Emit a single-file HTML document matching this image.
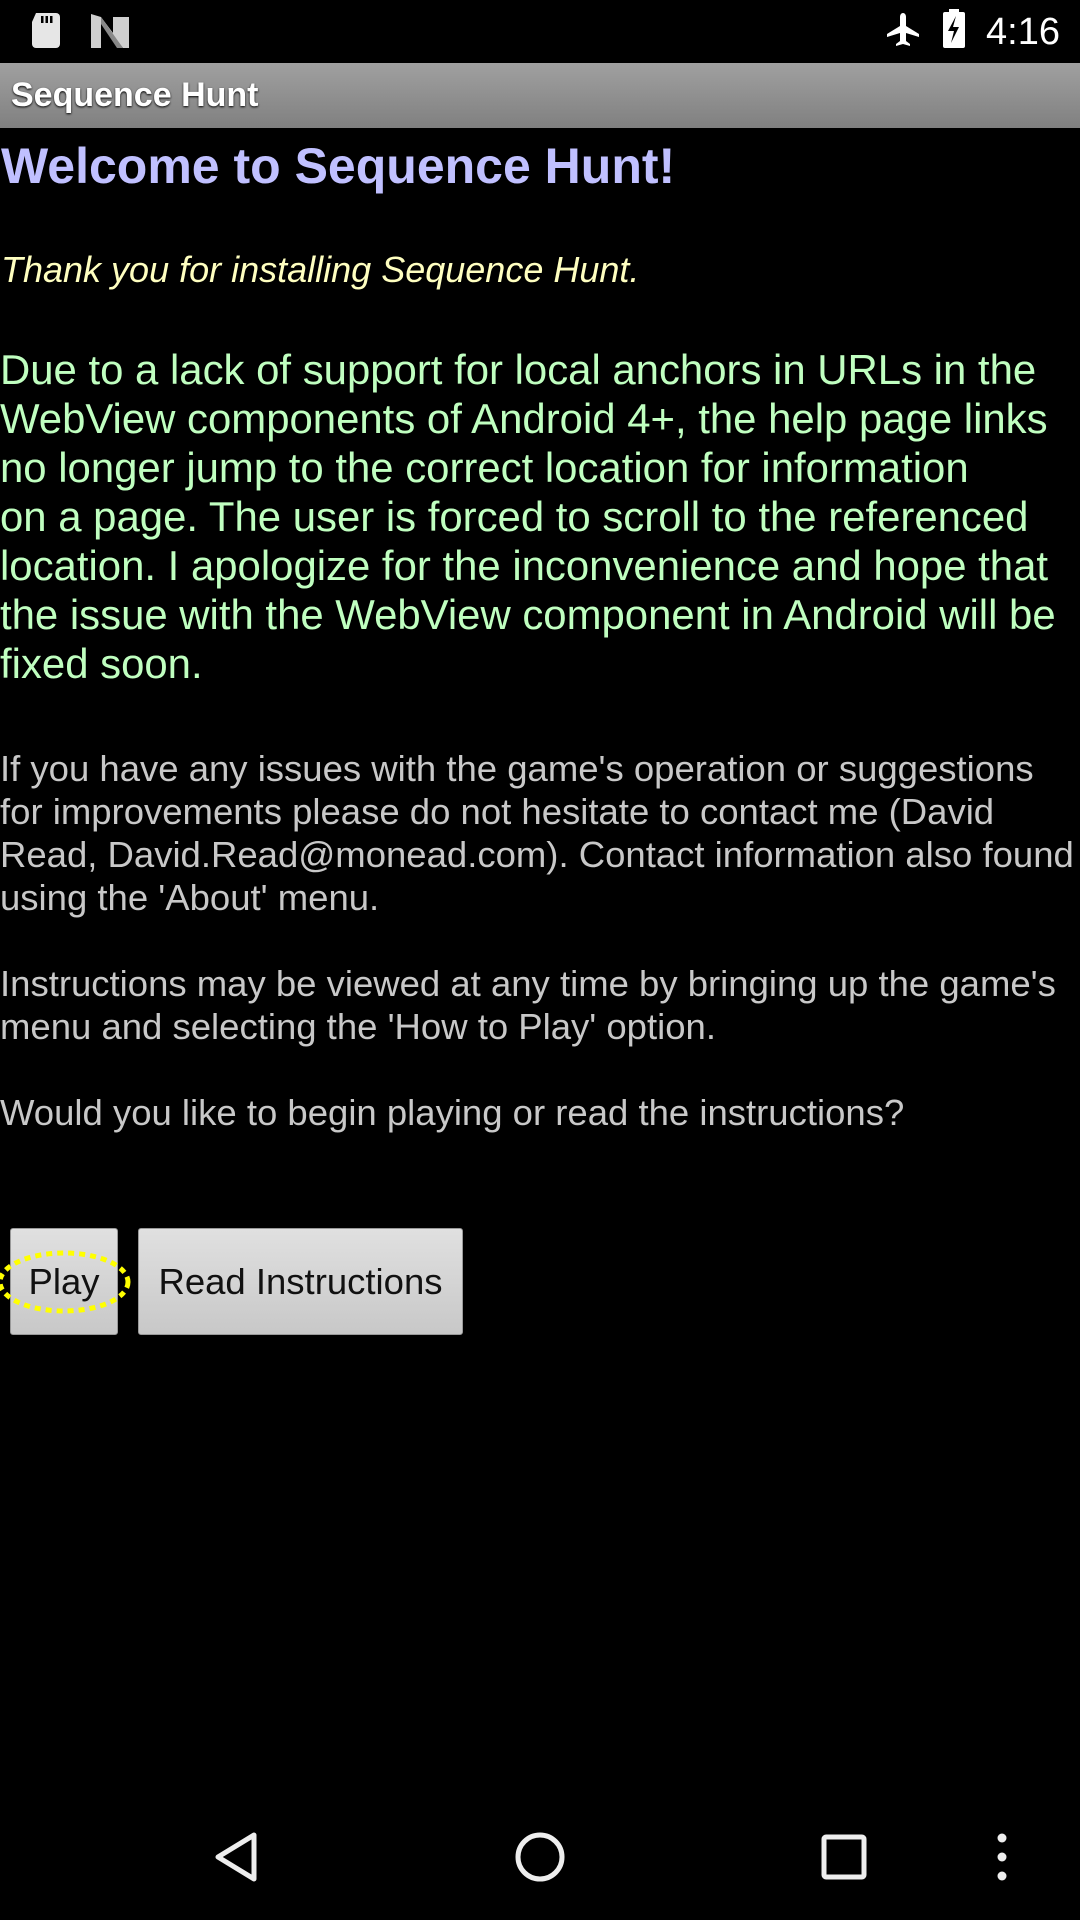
<!DOCTYPE html>
<html><head><meta charset="utf-8"><style>
*{margin:0;padding:0;box-sizing:border-box}
body{width:1080px;height:1920px;background:#000;position:relative;overflow:hidden;font-family:"Liberation Sans",sans-serif}
.a{position:absolute;white-space:nowrap;left:0}
.g{color:#c0ffc0;font-size:41.9px;line-height:49px}
.y{color:#c8c8c8;font-size:36.5px;line-height:43px}
.btn{position:absolute;top:1228px;height:107px;background:linear-gradient(#e0e0e0,#c8c8c8);border:1px solid #999;border-radius:3px;color:#111;font-size:36.5px;text-align:center;line-height:105px}
</style></head><body>
<!-- status bar -->
<svg class="a" style="top:0" width="1080" height="63">
<path d="M36 13h20a4 4 0 0 1 4 4v27a4 4 0 0 1-4 4H36a4 4 0 0 1-4-4V22z" fill="#e6e6e6"/>
<rect x="41" y="16" width="2.5" height="7" fill="#000"/><rect x="45.5" y="16" width="2.5" height="7" fill="#000"/><rect x="50" y="16" width="2.5" height="7" fill="#000"/>
<path d="M91 14l10 3 12 16V17h16v31h-6l-22-28v28H91z" fill="#cfcfcf"/>
<path d="M101 17l22 31h-6L101 24z" fill="#888"/>
<path d="M903 13c2 0 3 2 3 4v9l13 8v3l-13-4v8l4 3v2l-7-2-7 2v-2l4-3v-8l-13 4v-3l13-8v-9c0-2 1-4 3-4z" fill="#fff"/>
<rect x="943" y="12" width="22" height="36" rx="2" fill="#fff"/><rect x="949" y="9" width="10" height="4" fill="#fff"/>
<path d="M956 16l-8 15h6l-3 12 8-16h-6z" fill="#000"/>
<text x="986" y="44" fill="#fff" font-size="38" font-family="Liberation Sans">4:16</text>
</svg>
<!-- title bar -->
<div class="a" style="top:63px;width:1080px;height:65px;background:linear-gradient(#a0a0a0,#808080)"></div>
<div class="a" style="top:76px;left:11px;color:#fff;font-size:34px;font-weight:bold;text-shadow:0 1px 2px #000">Sequence Hunt</div>
<div class="a" style="top:137px;left:1px;color:#c0c0ff;font-size:50px;font-weight:bold">Welcome to Sequence Hunt!</div>
<div class="a" style="top:249px;left:1px;color:#ffffc0;font-size:36px;font-style:italic">Thank you for installing Sequence Hunt.</div>
<div class="a g" style="top:345px">Due to a lack of support for local anchors in URLs in the<br>WebView components of Android 4+, the help page links<br>no longer jump to the correct location for information<br>on a page. The user is forced to scroll to the referenced<br>location. I apologize for the inconvenience and hope that<br>the issue with the WebView component in Android will be<br>fixed soon.</div>
<div class="a y" style="top:747px">If you have any issues with the game's operation or suggestions<br>for improvements please do not hesitate to contact me (David<br>Read, David.Read@monead.com). Contact information also found<br>using the 'About' menu.</div>
<div class="a y" style="top:962px">Instructions may be viewed at any time by bringing up the game's<br>menu and selecting the 'How to Play' option.</div>
<div class="a y" style="top:1091px">Would you like to begin playing or read the instructions?</div>
<div class="btn" style="left:10px;width:108px">Play</div>
<div class="btn" style="left:138px;width:325px">Read Instructions</div>
<svg class="a" style="top:1250px" width="140" height="70"><ellipse cx="64" cy="32" rx="64" ry="29" fill="none" stroke="#ff0" stroke-width="5" stroke-dasharray="6 5"/></svg>
<!-- nav bar -->
<svg class="a" style="top:1820px" width="1080" height="80">
<path d="M254 15v44L218 37z" fill="none" stroke="#eee" stroke-width="5" stroke-linejoin="round"/>
<circle cx="540" cy="37" r="22" fill="none" stroke="#eee" stroke-width="5"/>
<rect x="824" y="17" width="40" height="40" rx="2" fill="none" stroke="#eee" stroke-width="5"/>
<circle cx="1002" cy="18" r="4.5" fill="#eee"/><circle cx="1002" cy="37" r="4.5" fill="#eee"/><circle cx="1002" cy="56" r="4.5" fill="#eee"/>
</svg>
</body></html>
